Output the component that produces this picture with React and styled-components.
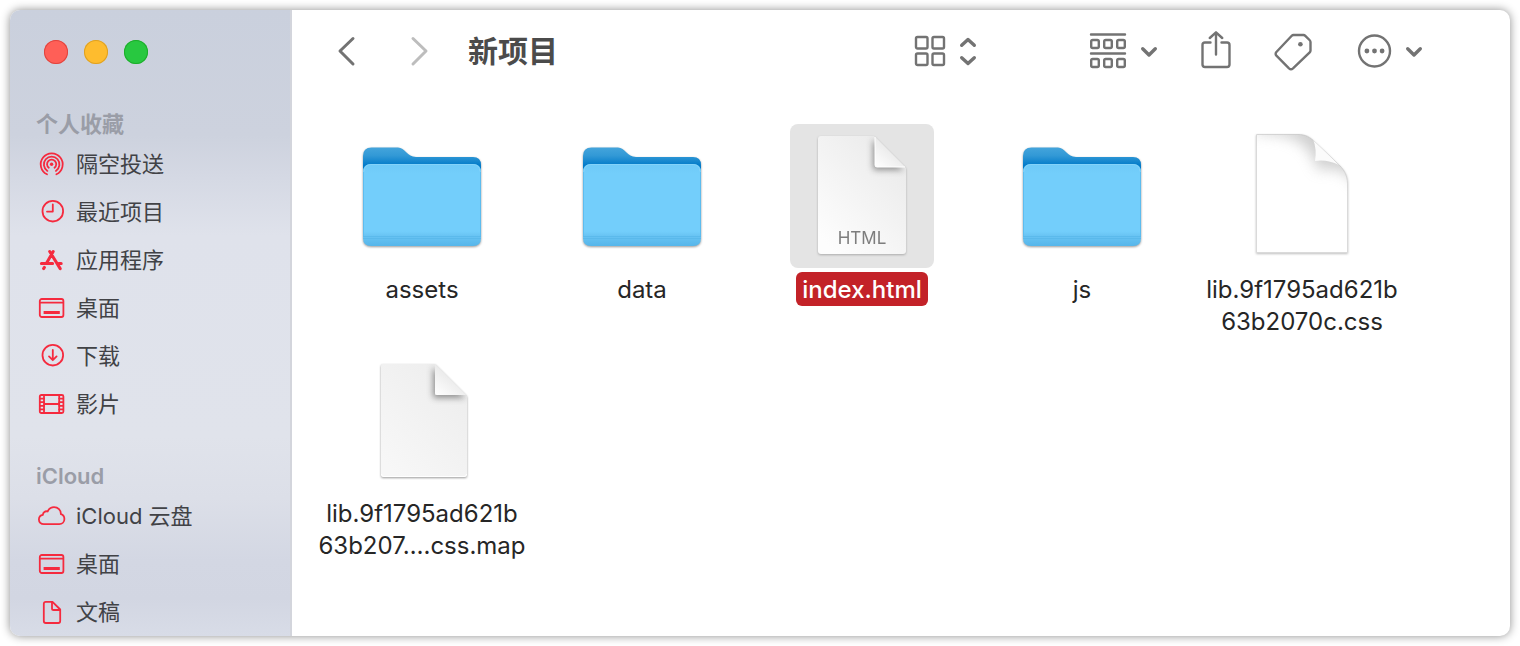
import React from 'react';
import styled, { createGlobalStyle } from 'styled-components';

const GlobalStyle = createGlobalStyle`
  * {
    box-sizing: border-box;
  }

  body {
    margin: 0;
    padding: 10px;
    background: #fff;
    font-family: Inter, "Noto Sans CJK SC", sans-serif;
  }

  button {
    padding: 0;
    border: 0;
    background: none;
    color: inherit;
    font: inherit;
  }

  svg {
    display: block;
  }
`;

const AirDropIcon = () => (
  <SideSvg viewBox="0 0 28 28">
    <path d="M9 24.3A11 11 0 1 1 18.4 24.3" />
    <path d="M9.4 20.9A7.8 7.8 0 1 1 17.9 20.9" />
    <path d="M10.8 17.8A4.6 4.6 0 1 1 16.5 17.8" />
    <circle cx="13.6" cy="14.3" r="1.7" fill="#f52a3e" stroke="none" />
  </SideSvg>
);

const ClockIcon = () => (
  <SideSvg viewBox="0 0 28 28">
    <circle cx="14.8" cy="13.2" r="10.3" />
    <path d="M14.8 6.4V13.6H9" />
  </SideSvg>
);

const AppsIcon = () => (
  <SideSvg viewBox="0 0 28 28" $stroke={3}>
    <path d="M11.7 5.5L22.2 22.6M15.2 5.5L8.9 16.6M3.4 17.5H14.6M20.6 17.5H23.2M6.4 21.4L5.6 22.6" />
  </SideSvg>
);

const DesktopIcon = () => (
  <SideSvg viewBox="0 0 28 28">
    <rect x="1.8" y="5" width="23.6" height="18" rx="2" />
    <path d="M2 8.7H25" />
    <rect x="5.6" y="17" width="16.2" height="3" fill="#f52a3e" stroke="none" />
  </SideSvg>
);

const DownloadIcon = () => (
  <SideSvg viewBox="0 0 28 28">
    <circle cx="14.8" cy="13.2" r="10.3" />
    <path d="M14.8 8V18M11 14.4L14.8 18.2L18.6 14.4" />
  </SideSvg>
);

const FilmIcon = () => (
  <SideSvg viewBox="0 0 28 28">
    <rect x="1.8" y="5" width="23.6" height="18" rx="1.5" />
    <path d="M6 5V23M21.2 5V23M6 14H21.2" />
    <path d="M2 8.6H6M2 12.2H6M2 15.8H6M2 19.4H6M21.2 8.6H25M21.2 12.2H25M21.2 15.8H25M21.2 19.4H25" />
  </SideSvg>
);

const CloudIcon = () => (
  <SideSvg viewBox="0 0 28 28">
    <path d="M6 22.2C2.8 22.2 .9 20.2 .9 17.6C.9 15 2.6 13.2 4.9 12.9C4.8 10.4 7.3 8.6 9.7 9.5C11 6.6 13.2 5.2 16 5.2C20 5.2 23 8.2 22.9 12.2C25.3 12.9 26.4 14.8 26.4 17C26.4 20 24.2 22.2 21.2 22.2Z" />
  </SideSvg>
);

const DocumentIcon = () => (
  <SideSvg viewBox="0 0 28 28">
    <path d="M14.5 3.8H7.8Q5.8 3.8 5.8 5.8V23Q5.8 25 7.8 25H20.2Q22.2 25 22.2 23V11.5Z" />
    <path d="M14 4V10.4Q14 12 15.6 12H22" />
  </SideSvg>
);

const FolderArt = () => (
  <ArtSvg viewBox="0 0 144 144">
    <defs>
      <linearGradient id="folderBack" x1="0" y1="23" x2="0" y2="42" gradientUnits="userSpaceOnUse">
        <stop offset="0" stopColor="#45a5dc" />
        <stop offset="0.45" stopColor="#3299d6" />
        <stop offset="1" stopColor="#0079c8" />
      </linearGradient>
      <linearGradient id="folderFront" x1="0" y1="40" x2="0" y2="122" gradientUnits="userSpaceOnUse">
        <stop offset="0" stopColor="#6fcaf8" />
        <stop offset="0.12" stopColor="#73cefb" />
        <stop offset="0.82" stopColor="#73cefb" />
        <stop offset="0.88" stopColor="#68c3f3" />
        <stop offset="1" stopColor="#56b6ea" />
      </linearGradient>
    </defs>
    <path
      d="M13 112V32Q13 23.500 21.500 23.500H48C55 23.500 57 33 66 33H123Q131 33 131 41V112Z"
      fill="url(#folderBack)"
    />
    <path
      d="M13 48Q13 40 21 40H123Q131 40 131 48V114Q131 122 123 122H21Q13 122 13 114Z"
      fill="url(#folderFront)"
    />
    <path d="M14 47.500Q14.500 40.500 21 40.500H123Q129.500 40.500 130 47.500" fill="none" stroke="#84d3fa" />
    <path d="M13.500 48V113M130.500 48V113" stroke="#5dbcee" />
    <path d="M13 112.500H131M13 114.500H131" stroke="#58b7ea" strokeWidth="0.8" />
  </ArtSvg>
);

const PageArt = ({ type }) => (
  <ArtSvg viewBox="0 0 144 144" $soft>
    <defs>
      <linearGradient id="page" x1="1" y1="0" x2="0.2" y2="1">
        <stop offset="0" stopColor="#e8e8e8" />
        <stop offset="1" stopColor="#fdfdfd" />
      </linearGradient>
      <linearGradient id="fold" x1="0" y1="1" x2="0.6" y2="0.3">
        <stop offset="0" stopColor="#ffffff" />
        <stop offset="1" stopColor="#e6e6e6" />
      </linearGradient>
      <filter id="foldShade" x="-50%" y="-50%" width="200%" height="200%">
        <feDropShadow dx="-2" dy="3" stdDeviation="3" floodOpacity="0.4" />
      </filter>
      <clipPath id="pageClip">
        <path d="M31 12H84L116 44V127Q116 130 113 130H31Q28 130 28 127V15Q28 12 31 12Z" />
      </clipPath>
    </defs>
    <g clipPath="url(#pageClip)">
      <rect x="28" y="12" width="88" height="118" fill="url(#page)" />
      <path d="M85 12V41Q85 43 87 43H116Z" fill="url(#fold)" filter="url(#foldShade)" />
    </g>
    <path d="M85 13V41Q85 43 87 43H115" fill="none" stroke="#fff" />
    <text x="72" y="120" textAnchor="middle">{type}</text>
  </ArtSvg>
);

const PlainArt = () => (
  <ArtSvg viewBox="0 0 144 144">
    <defs>
      <linearGradient id="plain" x1="1" y1="0" x2="0.2" y2="1">
        <stop offset="0" stopColor="#ececec" />
        <stop offset="1" stopColor="#f7f7f7" />
      </linearGradient>
      <clipPath id="plainClip">
        <path d="M33 16H85L117 48V127Q117 129 115 129H33Q31 129 31 127V18Q31 16 33 16Z" />
      </clipPath>
    </defs>
    <g clipPath="url(#plainClip)">
      <rect x="31" y="16" width="87" height="113" fill="url(#plain)" />
      <path d="M85 16V45Q85 47 87 47H118Z" fill="url(#fold)" filter="url(#foldShade)" />
    </g>
    <path d="M31.500 126Q31.500 128.500 34 128.500H114Q116.500 128.500 116.500 126" fill="none" stroke="#fff" />
  </ArtSvg>
);

const CurlArt = () => (
  <ArtSvg viewBox="0 0 144 144" $soft>
    <defs>
      <filter id="curlShade" x="-60%" y="-60%" width="220%" height="220%">
        <feGaussianBlur stdDeviation="7" />
      </filter>
      <clipPath id="curlClip">
        <path d="M26.500 10.500H68C76 10.500 80 13 85 18L107 39C114 45 117.500 51 117.500 60V128.500H26.500Z" />
      </clipPath>
    </defs>
    <path
      d="M26.500 10.500H68C76 10.500 80 13 85 18L107 39C114 45 117.500 51 117.500 60V128.500H26.500Z"
      fill="#fff"
      stroke="#dadada"
    />
    <g clipPath="url(#curlClip)">
      <path d="M26 0H130V66C120 48 108 42 88 46C80 20 66 9 26 9Z" fill="#a8a8a8" opacity="0.55" filter="url(#curlShade)" />
      <path d="M83 15Q87 25 85 37Q97 35 109 41Z" fill="#fbfbfb" />
    </g>
  </ArtSvg>
);

const art = {
  folder: <FolderArt />,
  html: <PageArt type="HTML" />,
  curl: <CurlArt />,
  plain: <PlainArt />,
};

const sections = [
  {
    title: '个人收藏',
    items: [
      { label: '隔空投送', icon: <AirDropIcon /> },
      { label: '最近项目', icon: <ClockIcon /> },
      { label: '应用程序', icon: <AppsIcon /> },
      { label: '桌面', icon: <DesktopIcon /> },
      { label: '下载', icon: <DownloadIcon /> },
      { label: '影片', icon: <FilmIcon /> },
    ],
  },
  {
    title: 'iCloud',
    items: [
      { label: 'iCloud 云盘', icon: <CloudIcon /> },
      { label: '桌面', icon: <DesktopIcon /> },
      { label: '文稿', icon: <DocumentIcon /> },
    ],
  },
];

const files = [
  { kind: 'folder', lines: ['assets'] },
  { kind: 'folder', lines: ['data'] },
  { kind: 'html', lines: ['index.html'], selected: true },
  { kind: 'folder', lines: ['js'] },
  { kind: 'curl', lines: ['lib.9f1795ad621b', '63b2070c.css'] },
  { kind: 'plain', lines: ['lib.9f1795ad621b', '63b207….css.map'] },
];

const ChevronDown = () => (
  <ToolSvg width="18" height="40" $stroke={3.4}>
    <path d="M2.700 17.700L9 24L15.300 17.700" />
  </ToolSvg>
);

const App = () => {
  return (
    <>
      <GlobalStyle />
      <Window>
        <Sidebar>
          <Lights>
            <Light type="button" aria-label="关闭" $color="#ff5f57" $edge="#e0443e" />
            <Light type="button" aria-label="最小化" $color="#febc2e" $edge="#dea123" />
            <Light type="button" aria-label="缩放" $color="#28c840" $edge="#1dad2b" />
          </Lights>
          {sections.map((section) => (
            <Section key={section.title}>
              <SectionTitle>{section.title}</SectionTitle>
              {section.items.map((item) => (
                <SideItem href="#" key={item.label}>
                  {item.icon}
                  {item.label}
                </SideItem>
              ))}
            </Section>
          ))}
        </Sidebar>

        <Main>
          <Toolbar>
            <ToolButton type="button" aria-label="后退">
              <ToolSvg width="20" height="40" $stroke={3}>
                <path d="M17 7.500L4 20L17 33" />
              </ToolSvg>
            </ToolButton>
            <ForwardButton type="button" aria-label="前进" disabled>
              <ToolSvg width="20" height="40" $stroke={3}>
                <path d="M3 7.500L16 20L3 33" />
              </ToolSvg>
            </ForwardButton>
            <Title>新项目</Title>

            <Tools>
              <ViewButton type="button" aria-label="显示方式">
                <ToolSvg width="32" height="40">
                  <rect x="2" y="6" width="11.500" height="11.500" rx="1.500" />
                  <rect x="18.500" y="6" width="11.500" height="11.500" rx="1.500" />
                  <rect x="2" y="22.500" width="11.500" height="11.500" rx="1.500" />
                  <rect x="18.500" y="22.500" width="11.500" height="11.500" rx="1.500" />
                </ToolSvg>
                <ToolSvg width="18" height="40" $stroke={3.4}>
                  <path d="M2.700 14.300L9 8.500L15.300 14.300M2.700 26.700L9 32.500L15.300 26.700" />
                </ToolSvg>
              </ViewButton>
              <ToolButton type="button" aria-label="群组">
                <ToolSvg width="38" height="40">
                  <path d="M2 3.500H36M2 22.500H36" />
                  <rect x="2.200" y="9" width="7.600" height="8" rx="1.500" />
                  <rect x="15.200" y="9" width="7.600" height="8" rx="1.500" />
                  <rect x="28.200" y="9" width="7.600" height="8" rx="1.500" />
                  <rect x="2.200" y="28" width="7.600" height="8" rx="1.500" />
                  <rect x="15.200" y="28" width="7.600" height="8" rx="1.500" />
                  <rect x="28.200" y="28" width="7.600" height="8" rx="1.500" />
                </ToolSvg>
                <ChevronDown />
              </ToolButton>
              <ToolButton type="button" aria-label="共享">
                <ToolSvg width="32" height="40">
                  <path d="M10.500 11.500H5Q2.500 11.500 2.500 14V33.500Q2.500 36 5 36H27Q29.500 36 29.500 33.500V14Q29.500 11.500 27 11.500H21.500" />
                  <path d="M16 23.500V1.500M9.800 7L16 1.300L22.200 7" />
                </ToolSvg>
              </ToolButton>
              <ToolButton type="button" aria-label="标签">
                <ToolSvg width="40" height="40">
                  <path d="M19.500 4H29.500Q30.500 4 31.300 4.800L35.500 9Q36.500 10 36.500 11V19.500Q36.500 20.500 35.700 21.300L19 37.300Q17 39 15 37.300L2.400 24.700Q.9 23 2.400 21L17.500 5Q18.500 4 19.500 4Z" />
                  <circle cx="26.400" cy="13.300" r="2.300" fill="#737373" stroke="none" />
                </ToolSvg>
              </ToolButton>
              <ToolButton type="button" aria-label="更多">
                <ToolSvg width="36" height="40">
                  <circle cx="18.500" cy="20" r="15.500" />
                  <g fill="#737373" stroke="none">
                    <circle cx="10.900" cy="20" r="2.400" />
                    <circle cx="18.500" cy="20" r="2.400" />
                    <circle cx="26.100" cy="20" r="2.400" />
                  </g>
                </ToolSvg>
                <ChevronDown />
              </ToolButton>
            </Tools>
          </Toolbar>

          <Files>
            {files.map((file) => (
              <File type="button" key={file.kind + file.lines.join('')}>
                <Thumb $selected={file.selected}>{art[file.kind]}</Thumb>
                <FileName $selected={file.selected}>
                  {file.lines.map((line) => (
                    <span key={line}>{line}</span>
                  ))}
                </FileName>
              </File>
            ))}
          </Files>
        </Main>
      </Window>
    </>
  );
};

const Window = styled.div`
  display: flex;
  min-height: calc(100vh - 20px);
  border-radius: 10px;
  overflow: hidden;
  background: #fff;
  box-shadow: 0 0 10px rgba(0, 0, 0, 0.45);
`;

const Sidebar = styled.nav`
  flex: 0 0 282px;
  padding-top: 30px;
  border-right: 2px solid #d3d5dc;
  background: linear-gradient(
    #cad0dd 0%,
    #cdd2de 20%,
    #d5d9e4 27%,
    #dfe2eb 36%,
    #e0e3eb 68%,
    #dcdfe8 78%,
    #d3d7e3 88%,
    #d2d6e2 94%,
    #d8dce7 100%
  );
`;

const Lights = styled.div`
  display: flex;
  gap: 16px;
  padding-left: 34px;
  margin-bottom: 44px;
`;

const Light = styled.button`
  width: 24px;
  height: 24px;
  border-radius: 50%;
  background: ${({ $color }) => $color};
  box-shadow: inset 0 0 0 1px ${({ $edge }) => $edge};
`;

const Section = styled.section`
  & + & {
    margin-top: 32px;
  }
`;

const SectionTitle = styled.h2`
  margin: 0;
  padding-left: 26px;
  color: #9a9da7;
  font-size: 22px;
  font-weight: 600;
  line-height: 32px;
`;

const SideItem = styled.a`
  display: flex;
  align-items: center;
  gap: 10px;
  height: 48px;
  padding-left: 28px;
  color: #414246;
  font-size: 22px;
  line-height: 32px;
  text-decoration: none;
  white-space: nowrap;
`;

const SideSvg = styled.svg`
  width: 28px;
  height: 28px;
  fill: none;
  stroke: #f52a3e;
  stroke-width: ${({ $stroke }) => $stroke || 1.8};
  stroke-linecap: round;
  stroke-linejoin: round;
`;

const Main = styled.main`
  flex: 1;
  min-width: 0;
`;

const Toolbar = styled.header`
  display: flex;
  align-items: center;
  height: 82px;
  padding: 0 87px 0 44px;
  color: #737373;
`;

const ToolButton = styled.button`
  display: flex;
  align-items: center;
  gap: 13px;
`;

const ForwardButton = styled(ToolButton)`
  margin: 0 38px 0 54px;
  color: #bdbdbd;
`;

const ViewButton = styled(ToolButton)`
  margin-right: 70px;
`;

const Title = styled.h1`
  margin: 0;
  color: #4b4b4b;
  font-size: 30px;
  font-weight: 700;
  line-height: 40px;
  white-space: nowrap;
`;

const Tools = styled.div`
  display: flex;
  align-items: center;
  gap: 42px;
  margin-left: auto;
`;

const ToolSvg = styled.svg`
  fill: none;
  stroke: currentColor;
  stroke-width: ${({ $stroke }) => $stroke || 2.4};
  stroke-linecap: round;
  stroke-linejoin: round;
`;

const Files = styled.div`
  display: grid;
  grid-template-columns: repeat(auto-fill, 220px);
  row-gap: 10px;
  padding: 32px 0 0 20px;
`;

const File = styled.button`
  display: flex;
  flex-direction: column;
  align-items: center;
  gap: 4px;
`;

const Thumb = styled.span`
  width: 144px;
  height: 144px;
  border-radius: 8px;
  background: ${({ $selected }) => ($selected ? '#e4e4e4' : 'transparent')};
`;

const ArtSvg = styled.svg`
  width: 144px;
  height: 144px;
  filter: drop-shadow(0 1px 1px rgba(0, 0, 0, ${({ $soft }) => ($soft ? 0.25 : 0.4)}));

  text {
    fill: #7d7d7d;
    font-size: 17px;
  }
`;

const FileName = styled.span`
  display: flex;
  flex-direction: column;
  padding: 2px 6px 0;
  border-radius: 6px;
  background: ${({ $selected }) => ($selected ? '#c32228' : 'transparent')};
  color: ${({ $selected }) => ($selected ? '#fff' : '#262626')};
  font-size: 24px;
  font-weight: ${({ $selected }) => ($selected ? 500 : 400)};
  line-height: 32px;
  white-space: nowrap;
`;

export default App;
